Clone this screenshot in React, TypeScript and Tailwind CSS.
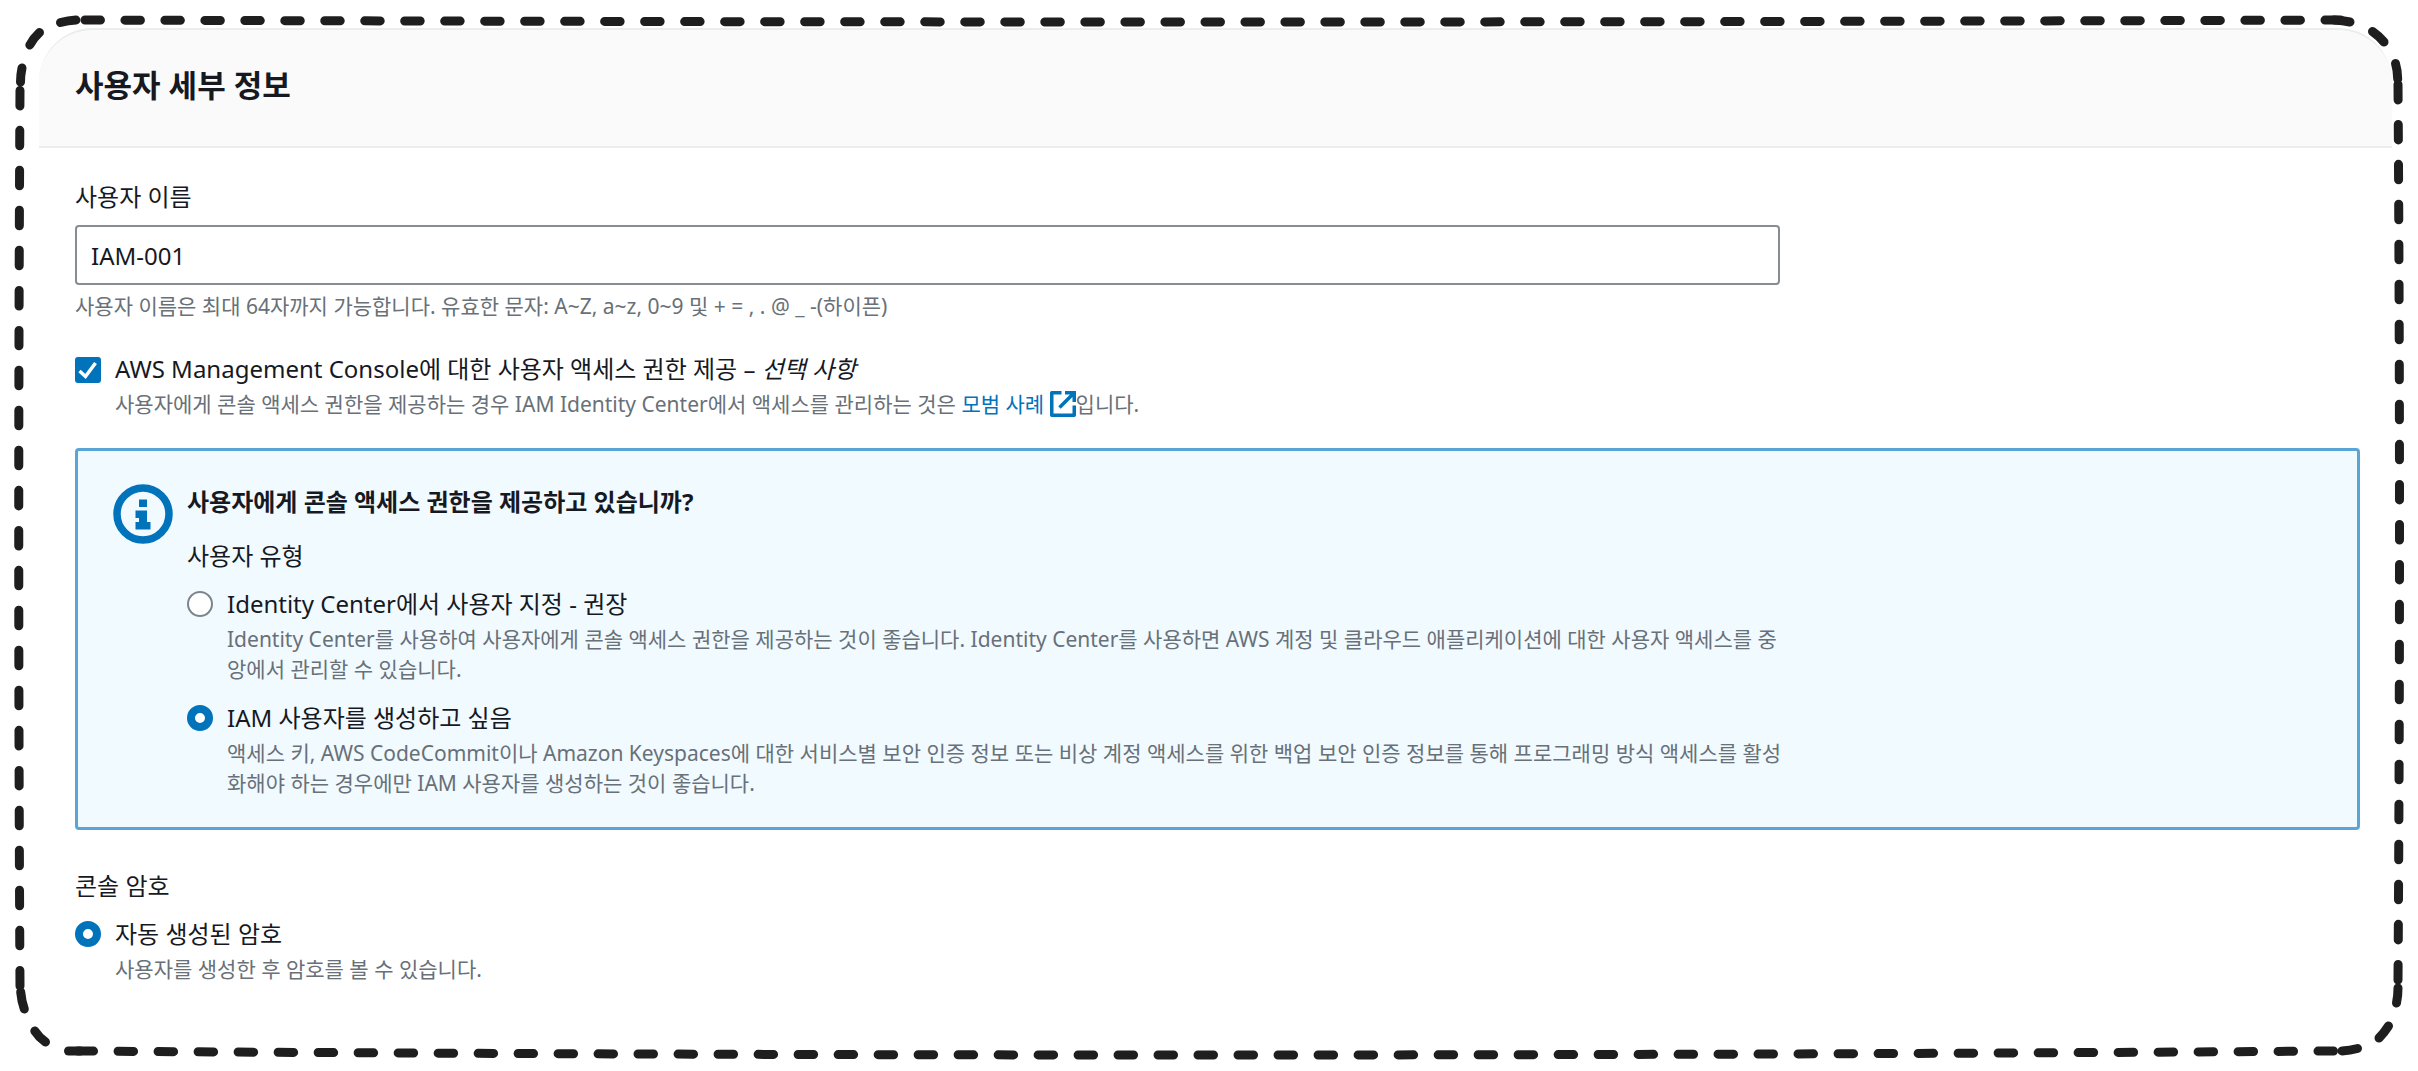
import React, { useState } from 'react';

type OptionProps = {
  id: string;
  name: string;
  label: string;
  description: string;
  checked: boolean;
  onSelect: () => void;
};

const RadioOption = ({ id, name, label, description, checked, onSelect }: OptionProps) => (
  <div className="flex items-start gap-[14px]">
    <input
      type="radio"
      id={id}
      name={name}
      checked={checked}
      onChange={onSelect}
      aria-describedby={`${id}-desc`}
      className="mt-[5px] size-[26px] shrink-0 appearance-none rounded-full border-2 border-[#7d858c] bg-white checked:border-8 checked:border-[#0073bb]"
    />
    <div>
      <label htmlFor={id} className="block text-[24px] leading-[36px]">
        {label}
      </label>
      <p id={`${id}-desc`} className="mt-0.5 break-all text-[21px] leading-[30px] text-[#687078]">
        {description}
      </p>
    </div>
  </div>
);

const InfoIcon = () => (
  <svg viewBox="0 0 60 60" className="size-[60px] shrink-0" aria-hidden="true">
    <circle cx="30" cy="30" r="26" fill="none" stroke="#0073bb" strokeWidth="7.5" />
    <path fill="#0073bb" d="M26 15.500h8v7.500h-8zM22.500 26.500h11.500v11.500h3.500v7.500h-15v-7.500h3.500v-4h-3.500z" />
  </svg>
);

const ExternalIcon = () => (
  <svg viewBox="0 0 26 26" className="inline size-[26px] align-[-5px]" fill="none" stroke="#0073bb" strokeWidth="3.500" aria-hidden="true">
    <path d="M11.500 1.750H1.750v22.500h22.500V14.500" strokeLinejoin="round" />
    <path d="M15 1.750h9.250V11M23.500 2.500L9.500 16.500" />
  </svg>
);

/* Hand-drawn dashed outline around the whole page */
const DashedFrame = () => (
  <svg
    viewBox="0 0 2418 1071"
    preserveAspectRatio="none"
    className="pointer-events-none absolute inset-0 size-full"
    fill="none"
    stroke="#1e1e1e"
    strokeWidth="9"
    strokeLinecap="round"
    aria-hidden="true"
  >
    <g strokeDasharray="15.500 24.500">
      <path d="M85 20Q1210 24 2341 20" />
      <path d="M2398 84.500Q2401 530 2398 980" />
      <path d="M2333.500 1051Q1210 1059 78 1051" />
      <path d="M20 90.500Q17.500 530 20 987" />
    </g>
    <path d="M2334 20Q2343 20.500 2350 22" />
    <path d="M2372.500 31.500Q2379 36 2384 42" />
    <path d="M2395.500 63.500Q2397.500 70 2397.700 79" />
    <path d="M2398 988Q2398 996 2396.500 1003" />
    <path d="M2388.500 1026Q2384 1033 2379 1038" />
    <path d="M2357.500 1048.500Q2350 1050.500 2342 1051" />
    <path d="M68.500 1051H80" />
    <path d="M45.500 1042Q39 1037.500 34.800 1031" />
    <path d="M24.300 1009Q21.500 1001 20.700 992" />
    <path d="M20.500 82Q20.500 75 22 68" />
    <path d="M29.800 45Q33.500 38 39.500 32.500" />
    <path d="M60.500 22.500Q68 20.500 76 20" />
  </svg>
);

export default function App() {
  const [userName, setUserName] = useState('IAM-001');
  const [consoleAccess, setConsoleAccess] = useState(true);
  const [userType, setUserType] = useState('iam');
  const [password, setPassword] = useState('auto');

  return (
    <main className="relative min-h-screen bg-white px-[39px] pt-[28px] pr-[26px] pb-16 font-['Noto_Sans','Noto_Sans_CJK_KR',sans-serif] text-[#16191f]">
      <DashedFrame />

      <header className="rounded-t-[54px] border-t-2 border-b-2 border-[#eaeded] bg-[#fafafa] px-9 pt-[35px] pb-[41px]">
        <h1 className="text-[31px] leading-[40px] font-bold">사용자 세부 정보</h1>
      </header>

      <form className="pt-[31px] pr-[32px] pl-9">
        <div className="max-w-[1705px]">
          <label htmlFor="user-name" className="block text-[24px] leading-[36px]">
            사용자 이름
          </label>
          <input
            id="user-name"
            type="text"
            value={userName}
            onChange={(e) => setUserName(e.target.value)}
            aria-describedby="user-name-hint"
            className="mt-[10px] block h-[60px] w-full rounded-[4px] border-2 border-[#858d94] bg-white px-[14px] text-[24px]"
          />
          <p id="user-name-hint" className="mt-[6px] text-[21px] leading-[30px] text-[#687078]">
            사용자 이름은 최대 64자까지 가능합니다. 유효한 문자: A~Z, a~z, 0~9 및 + = , . @ _ -(하이픈)
          </p>
        </div>

        <div className="mt-[30px] flex items-start gap-[14px]">
          <div className="mt-[6px] grid size-[26px] shrink-0">
            <input
              id="console-access"
              type="checkbox"
              checked={consoleAccess}
              onChange={(e) => setConsoleAccess(e.target.checked)}
              aria-describedby="console-access-desc"
              className="peer col-start-1 row-start-1 size-[26px] appearance-none rounded-[3px] border-2 border-[#7d858c] bg-white checked:border-[#0073bb] checked:bg-[#0073bb]"
            />
            <svg viewBox="0 0 26 26" className="pointer-events-none invisible col-start-1 row-start-1 size-[26px] peer-checked:visible" fill="none" stroke="#fff" strokeWidth="3.500" aria-hidden="true">
              <path d="M4.500 14l6 5.500L20.500 6" />
            </svg>
          </div>
          <div>
            <label htmlFor="console-access" className="block text-[24px] leading-[36px]">
              AWS Management Console에 대한 사용자 액세스 권한 제공 – <em>선택 사항</em>
            </label>
            <p id="console-access-desc" className="mt-0.5 text-[21px] leading-[30px] text-[#687078]">
              사용자에게 콘솔 액세스 권한을 제공하는 경우 IAM Identity Center에서 액세스를 관리하는 것은{' '}
              <a href="#" className="text-[#0073bb]">
                모범 사례 <ExternalIcon />
              </a>
              입니다.
            </p>
          </div>
        </div>

        <section className="mt-[29px] flex items-start gap-[14px] rounded-[4px] border-[3px] border-[#5aa5d8] bg-[#f1faff] px-[35px] pt-[33px] pb-[29px]">
          <InfoIcon />
          <div className="max-w-[1600px]">
            <h2 className="text-[24px] leading-[36px] font-bold">사용자에게 콘솔 액세스 권한을 제공하고 있습니까?</h2>
            <fieldset className="mt-[18px]">
              <legend className="text-[24px] leading-[36px]">사용자 유형</legend>
              <div className="mt-3 flex flex-col gap-4">
                <RadioOption
                  id="type-center"
                  name="user-type"
                  label="Identity Center에서 사용자 지정 - 권장"
                  description="Identity Center를 사용하여 사용자에게 콘솔 액세스 권한을 제공하는 것이 좋습니다. Identity Center를 사용하면 AWS 계정 및 클라우드 애플리케이션에 대한 사용자 액세스를 중앙에서 관리할 수 있습니다."
                  checked={userType === 'center'}
                  onSelect={() => setUserType('center')}
                />
                <RadioOption
                  id="type-iam"
                  name="user-type"
                  label="IAM 사용자를 생성하고 싶음"
                  description="액세스 키, AWS CodeCommit이나 Amazon Keyspaces에 대한 서비스별 보안 인증 정보 또는 비상 계정 액세스를 위한 백업 보안 인증 정보를 통해 프로그래밍 방식 액세스를 활성화해야 하는 경우에만 IAM 사용자를 생성하는 것이 좋습니다."
                  checked={userType === 'iam'}
                  onSelect={() => setUserType('iam')}
                />
              </div>
            </fieldset>
          </div>
        </section>

        <fieldset className="mt-[38px]">
          <legend className="text-[24px] leading-[36px]">콘솔 암호</legend>
          <div className="mt-3">
            <RadioOption
              id="password-auto"
              name="password"
              label="자동 생성된 암호"
              description="사용자를 생성한 후 암호를 볼 수 있습니다."
              checked={password === 'auto'}
              onSelect={() => setPassword('auto')}
            />
          </div>
        </fieldset>
      </form>
    </main>
  );
}
